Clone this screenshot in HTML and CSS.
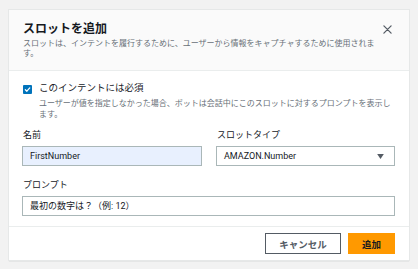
FILE: index.html
```html
<!DOCTYPE html>
<html lang="ja">
<head>
    <meta charset="UTF-8">
    <meta name="viewport" content="width=device-width, initial-scale=1.0">
    <title>スロットを追加</title>
    <link rel="stylesheet" href="styles.css">
</head>
<body>
    <div class="modal">
        <div class="modal-header">
            <div class="header-row">
                <h1>スロットを追加</h1>
                <button class="close-btn" aria-label="閉じる">
                    <svg viewBox="0 0 10 10" width="9" height="9">
                        <path d="M1 1L9 9M9 1L1 9" stroke="#545b64" stroke-width="1.4" stroke-linecap="round"/>
                    </svg>
                </button>
            </div>
            <p class="subtitle">スロットは、インテントを履行するために、ユーザーから情報をキャプチャするために使用されます。</p>
        </div>

        <div class="modal-body">
            <div class="check-row">
                <span class="checkbox">
                    <svg viewBox="0 0 10 10" width="9" height="9">
                        <rect width="10" height="10" rx="1" fill="#0073bb"/>
                        <path d="M2.6 5.3L4.3 6.9L7.5 3.2" fill="none" stroke="#fff" stroke-width="1.4" stroke-linecap="round" stroke-linejoin="round"/>
                    </svg>
                </span>
                <div class="check-text">
                    <div class="check-label">このインテントには必須</div>
                    <p class="check-desc">ユーザーが値を指定しなかった場合、ボットは会話中にこのスロットに対するプロンプトを表示します。</p>
                </div>
            </div>

            <div class="field-grid">
                <div class="field">
                    <label>名前</label>
                    <div class="input autofill">FirstNumber</div>
                </div>
                <div class="field">
                    <label>スロットタイプ</label>
                    <div class="input select">
                        <span>AMAZON.Number</span>
                        <svg viewBox="0 0 8 6" width="7" height="5">
                            <path d="M0 0H8L4 6Z" fill="#545b64"/>
                        </svg>
                    </div>
                </div>
            </div>

            <div class="field prompt">
                <label>プロンプト</label>
                <div class="input">最初の数字は？（例: 12）</div>
            </div>
        </div>

        <div class="modal-footer">
            <button class="btn btn-secondary">キャンセル</button>
            <button class="btn btn-primary">追加</button>
        </div>
    </div>
</body>
</html>
```

FILE: styles.css
```css
* {
    margin: 0;
    padding: 0;
    box-sizing: border-box;
}

body {
    font-family: Roboto, "Noto Sans CJK JP", sans-serif;
    background-color: #f2f2f2;
    color: #16191f;
    padding: 10px 9px;
}

.modal {
    width: 400px;
    height: 250px;
    background: white;
    box-shadow: 0 0 0 1px #e6e8e8, 0 1px 1px rgba(0, 28, 36, 0.3);
    display: flex;
    flex-direction: column;
}

.modal-header {
    background-color: #fafafa;
    border-bottom: 1px solid #eaeded;
    padding: 11px 17px 10px 14px;
    height: 61px;
}

.header-row {
    display: flex;
    align-items: center;
    justify-content: space-between;
}

h1 {
    font-size: 12px;
    line-height: 16px;
    font-weight: 700;
}

.close-btn {
    border: none;
    background: none;
    display: flex;
    cursor: pointer;
}

.subtitle {
    margin-top: 1.5px;
    max-width: 354px;
    font-size: 8px;
    line-height: 10.5px;
    color: #687078;
}

.modal-body {
    padding: 10px 14px 10px 13px;
    border-bottom: 1px solid #eaeded;
}

.check-row {
    display: flex;
    gap: 7px;
    padding-left: 1px;
}

.checkbox {
    display: flex;
    margin-top: 4px;
}

.check-label {
    font-size: 9.5px;
    line-height: 14px;
}

.check-desc {
    margin-top: 3px;
    font-size: 8px;
    line-height: 11px;
    color: #687078;
}

.field-grid {
    display: grid;
    grid-template-columns: 180px 179px;
    gap: 14px;
    margin-top: 9px;
}

.field label {
    display: block;
    font-size: 9px;
    line-height: 12px;
    margin-bottom: 5px;
    padding-left: 1px;
}

.prompt {
    margin-top: 13px;
}

.input {
    height: 20px;
    border: 1px solid #aab7b8;
    font-size: 9px;
    line-height: 18px;
    padding: 0 7px;
}

.autofill {
    background-color: #e8f0fe;
}

.select {
    display: flex;
    align-items: center;
    justify-content: space-between;
    padding-right: 10px;
}

.modal-footer {
    display: flex;
    justify-content: flex-end;
    gap: 7px;
    padding: 6px 14px;
}

.btn {
    height: 21px;
    font-family: inherit;
    font-size: 9.5px;
    font-weight: 700;
    cursor: pointer;
}

.btn-secondary {
    width: 76px;
    background: white;
    border: 1px solid #545b64;
    color: #545b64;
}

.btn-primary {
    width: 47px;
    background-color: #ff9900;
    border: 1px solid #ff9900;
    color: #16191f;
}
```
